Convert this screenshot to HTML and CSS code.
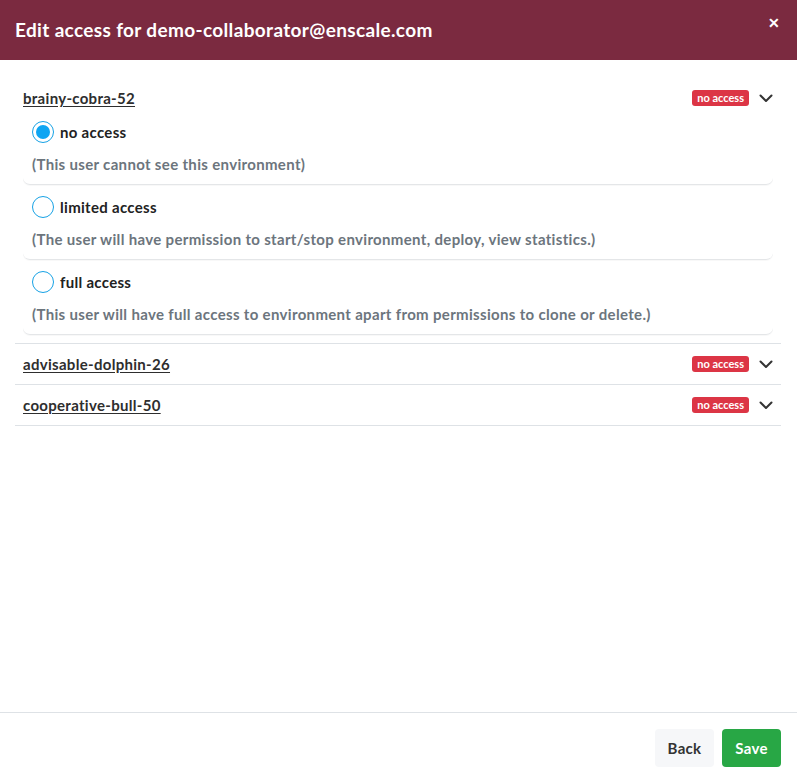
FILE: index.html
```html
<!DOCTYPE html>
<html lang="en">
<head>
<meta charset="utf-8">
<title>Edit access</title>
<link rel="stylesheet" href="styles.css">
</head>
<body>
<div class="modal">
  <div class="modal-header">
    <h1 class="modal-title">Edit access for demo-collaborator@enscale.com</h1>
    <span class="close">&#x2715;</span>
  </div>
  <div class="modal-body">
    <div class="env">
      <div class="env-head">
        <span class="env-name">brainy-cobra-52</span>
        <span class="env-right"><span class="badge">no access</span><svg class="chev" width="14" height="9" viewBox="0 0 14 9"><path d="M1.5 1.5 L7 7 L12.5 1.5" fill="none" stroke="#333" stroke-width="2" stroke-linecap="round" stroke-linejoin="round"/></svg></span>
      </div>
      <div class="options">
        <div class="option">
          <div class="opt-row"><span class="radio checked"></span><span class="opt-label">no access</span></div>
          <div class="opt-desc">(This user cannot see this environment)</div>
        </div>
        <div class="option">
          <div class="opt-row"><span class="radio"></span><span class="opt-label">limited access</span></div>
          <div class="opt-desc">(The user will have permission to start/stop environment, deploy, view statistics.)</div>
        </div>
        <div class="option">
          <div class="opt-row"><span class="radio"></span><span class="opt-label">full access</span></div>
          <div class="opt-desc">(This user will have full access to environment apart from permissions to clone or delete.)</div>
        </div>
      </div>
    </div>
    <div class="env">
      <div class="env-head">
        <span class="env-name">advisable-dolphin-26</span>
        <span class="env-right"><span class="badge">no access</span><svg class="chev" width="14" height="9" viewBox="0 0 14 9"><path d="M1.5 1.5 L7 7 L12.5 1.5" fill="none" stroke="#333" stroke-width="2" stroke-linecap="round" stroke-linejoin="round"/></svg></span>
      </div>
    </div>
    <div class="env">
      <div class="env-head">
        <span class="env-name">cooperative-bull-50</span>
        <span class="env-right"><span class="badge">no access</span><svg class="chev" width="14" height="9" viewBox="0 0 14 9"><path d="M1.5 1.5 L7 7 L12.5 1.5" fill="none" stroke="#333" stroke-width="2" stroke-linecap="round" stroke-linejoin="round"/></svg></span>
      </div>
    </div>
  </div>
  <div class="modal-footer">
    <button class="btn btn-back">Back</button>
    <button class="btn btn-save">Save</button>
  </div>
</div>
</body>
</html>
```
FILE: styles.css
```css
* { box-sizing: border-box; }
html, body { margin: 0; padding: 0; height: 100%; }
body {
  font-family: Lato, "Open Sans", sans-serif;
  font-weight: 700;
  color: #333;
  background: #fff;
}
.modal {
  display: flex;
  flex-direction: column;
  height: 782px;
}
.modal-header {
  background: #7b2a40;
  height: 60px;
  display: flex;
  justify-content: space-between;
  align-items: flex-start;
  padding: 0 15px;
}
.modal-title {
  margin: 0;
  color: #fff;
  font-size: 19px;
  letter-spacing: 0.35px;
  font-weight: 700;
  line-height: 60px;
}
.close {
  color: #fff;
  font-size: 14px;
  font-weight: 900;
  line-height: 14px;
  margin-top: 16px;
  margin-right: 2px;
}
.modal-body {
  flex: 1;
  padding: 18px 16px 0 15px;
}
.env {
  border-bottom: 1px solid #dee2e6;
}
.env-head {
  height: 40px;
  display: flex;
  align-items: center;
  justify-content: space-between;
  padding: 0 8px;
}
.env-name {
  font-size: 15px;
  letter-spacing: 0.3px;
  text-decoration: underline;
  text-underline-offset: 2px;
  color: #2e2e2e;
}
.env-right {
  display: flex;
  align-items: center;
  gap: 10px;
}
.badge {
  background: #dc3545;
  color: #fff;
  font-size: 11px;
  line-height: 16px;
  height: 16px;
  padding: 0 5px;
  border-radius: 3px;
  display: inline-block;
}
.chev { display: block; }
.options {
  margin: 0 8px;
  padding-top: 3px;
}
.option {
  padding: 0 9px 10px;
  margin-bottom: 11px;
  border-bottom: 1px solid #e4e6e8;
  border-radius: 0 0 7px 7px;
  box-shadow: 0 1px 1px rgba(0,0,0,0.03);
}
.option:last-child { margin-bottom: 8px; }
.opt-row {
  display: flex;
  align-items: center;
  height: 22px;
  gap: 6px;
}
.radio {
  width: 22px;
  height: 22px;
  border-radius: 50%;
  border: 1.5px solid #17a2e5;
  background: #fff;
  position: relative;
  flex: none;
}
.radio.checked::after {
  content: "";
  position: absolute;
  left: 2.5px;
  top: 2.5px;
  width: 14px;
  height: 14px;
  border-radius: 50%;
  background: #0ea5f2;
}
.opt-label {
  font-size: 15px;
  letter-spacing: 0.3px;
  color: #222;
}
.opt-desc {
  margin-top: 11px;
  font-size: 15px;
  letter-spacing: 0.33px;
  line-height: 20px;
  color: #6c757d;
}
.modal-footer {
  border-top: 1px solid #dee2e6;
  padding: 16px 16px 15px;
  display: flex;
  justify-content: flex-end;
  gap: 8px;
}
.btn {
  font-family: inherit;
  font-weight: 700;
  font-size: 15px;
  letter-spacing: 0.3px;
  height: 38px;
  width: 59px;
  border: none;
  border-radius: 4px;
  padding: 0;
}
.btn-back { background: #f6f7f9; color: #333; }
.btn-save { background: #28a745; color: #fff; }
```
